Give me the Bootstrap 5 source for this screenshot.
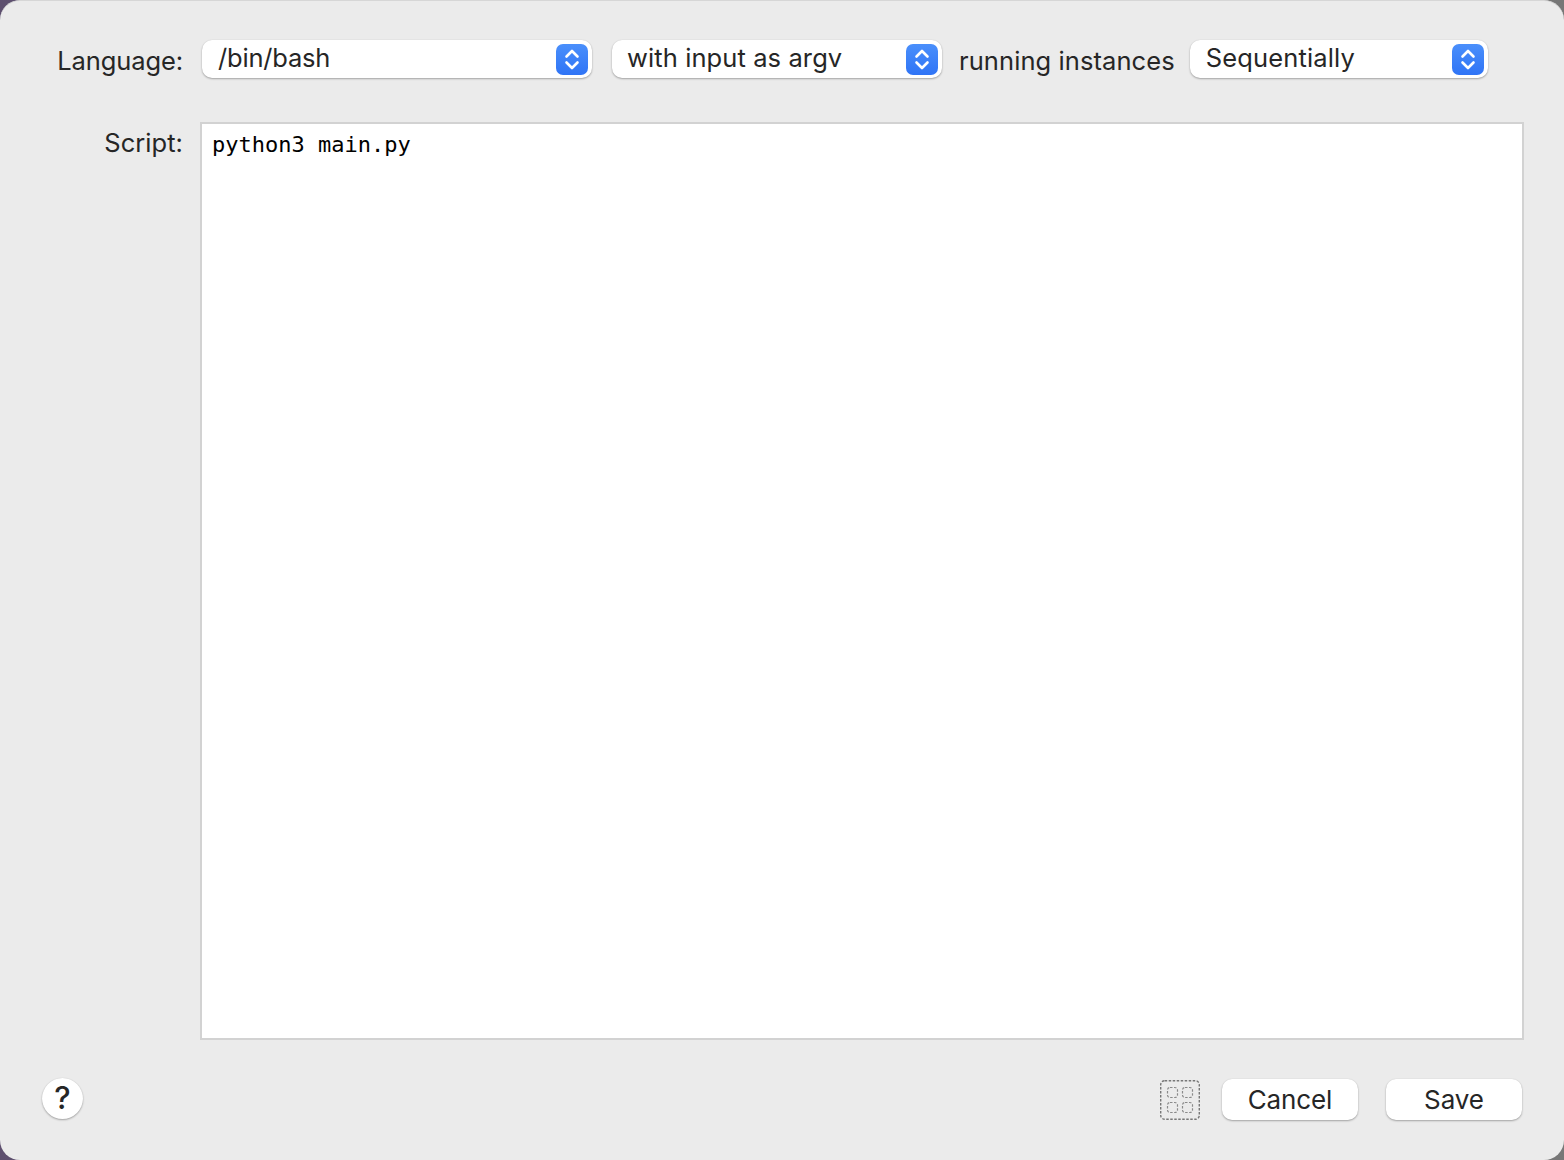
<!DOCTYPE html>
<html lang="en">
<head>
<meta charset="utf-8">
<title>Script</title>
<link href="https://cdn.jsdelivr.net/npm/bootstrap@5.3.0/dist/css/bootstrap.min.css" rel="stylesheet">
<style>
html, body { height: 100%; margin: 0; overflow: hidden; }
body { background: linear-gradient(90deg, #5d4f6e 0, #6b6475 20%, #6e6e70 70%, #777 100%); font-family: "Inter", "Liberation Sans", sans-serif; color: #262626; }
.sheet { height: 1160px; background: #ebebeb; border-radius: 20px; border-top: 1px solid #d6d6d6; padding: 38px 40px 0 42px; letter-spacing: -.1px; }
.lbl { font-size: 25.5px; line-height: 30px; }
.lbl-col { width: 141px; text-align: right; flex: none; }
.lbl-tight { margin-top: 4px; }
.lbl-script { margin-top: 6px; letter-spacing: .05px; }
.lbl-running { letter-spacing: .08px; margin-top: 3px; margin-left: 17px; }
.popup { height: 38px; background: #fff; border-radius: 10px; box-shadow: 0 1px 2px rgba(0,0,0,.3), 0 0 1px rgba(0,0,0,.12); font-size: 25.5px; line-height: 34px; padding: 0 4px 0 16px; }
.popup span { padding-bottom: 2px; }
.popup-a { width: 390px; margin-left: 19px; }
.popup-a span { letter-spacing: -.2px; }
.popup-b { width: 330px; margin-left: 20px; }
.popup-b span { letter-spacing: .1px; margin-left: -1px; }
.popup-c { width: 298px; margin-left: 15px; }
.popup-c span { letter-spacing: .15px; }
.stepper { width: 32px; height: 31px; border-radius: 7px; background: linear-gradient(180deg, #4a8ffb, #2f74f6); flex: none; }
.row-top { height: 40px; }
.row-script { margin-top: 43px; }
.script-area { width: 1324px; height: 918px; margin-left: 17px; background: #fff; border: 2px solid #d2d2d2; padding: 7px 10px; font-family: "DejaVu Sans Mono", "Liberation Mono", monospace; font-size: 22px; line-height: 28px; color: #000; letter-spacing: 0; }
.row-foot { margin-top: 39px; margin-right: 2px; }
.help-btn { width: 41px; height: 41px; border-radius: 50%; background: #fff; box-shadow: 0 1px 2px rgba(0,0,0,.3), 0 0 1px rgba(0,0,0,.12); font-size: 31px; line-height: 38px; text-align: center; font-weight: 500; padding: 0 0 2px; border: 0; color: #262626; margin-top: -2px; }
.push-btn { height: 41px; width: 136px; border-radius: 10px; background: #fff; box-shadow: 0 1px 2px rgba(0,0,0,.3), 0 0 1px rgba(0,0,0,.12); font-size: 26px; line-height: 40px; padding: 0; border: 0; color: #262626; letter-spacing: -.1px; }
.gap-icon { margin-left: 22px; }
.gap-save { margin-left: 28px; }
</style>
</head>
<body>
<div class="sheet">
  <div class="d-flex align-items-center row-top">
    <div class="lbl lbl-col lbl-tight">Language:</div>
    <div class="popup popup-a d-flex align-items-center justify-content-between"><span>/bin/bash</span>
      <svg class="stepper" viewBox="0 0 32 31"><path d="M10.5 12.5l5.5-5.5 5.5 5.5M10.5 18.5l5.5 5.5 5.5-5.5" fill="none" stroke="#fff" stroke-width="2.6" stroke-linecap="round" stroke-linejoin="round"/></svg></div>
    <div class="popup popup-b d-flex align-items-center justify-content-between"><span>with input as argv</span>
      <svg class="stepper" viewBox="0 0 32 31"><path d="M10.5 12.5l5.5-5.5 5.5 5.5M10.5 18.5l5.5 5.5 5.5-5.5" fill="none" stroke="#fff" stroke-width="2.6" stroke-linecap="round" stroke-linejoin="round"/></svg></div>
    <div class="lbl lbl-running">running instances</div>
    <div class="popup popup-c d-flex align-items-center justify-content-between"><span>Sequentially</span>
      <svg class="stepper" viewBox="0 0 32 31"><path d="M10.5 12.5l5.5-5.5 5.5 5.5M10.5 18.5l5.5 5.5 5.5-5.5" fill="none" stroke="#fff" stroke-width="2.6" stroke-linecap="round" stroke-linejoin="round"/></svg></div>
  </div>
  <div class="d-flex row-script">
    <div class="lbl lbl-col lbl-script">Script:</div>
    <div class="script-area">python3 main.py</div>
  </div>
  <div class="d-flex align-items-center row-foot">
    <button type="button" class="help-btn">?</button>
    <svg class="ms-auto" width="40" height="40" viewBox="0 0 40 40" fill="none" stroke-dasharray="2.5 1.5"><rect x=".7" y=".7" width="38.6" height="38.6" rx="4" stroke="#777" stroke-width="1.4"/><g stroke="#8a8a8a" stroke-width="1.2"><rect x="7.5" y="7.5" width="10" height="10" rx="2.5"/><rect x="22.5" y="7.5" width="10" height="10" rx="2.5"/><rect x="7.5" y="22.5" width="10" height="10" rx="2.5"/><rect x="22.5" y="22.5" width="10" height="10" rx="2.5"/></g></svg>
    <button type="button" class="push-btn gap-icon">Cancel</button>
    <button type="button" class="push-btn gap-save">Save</button>
  </div>
</div>
</body>
</html>
